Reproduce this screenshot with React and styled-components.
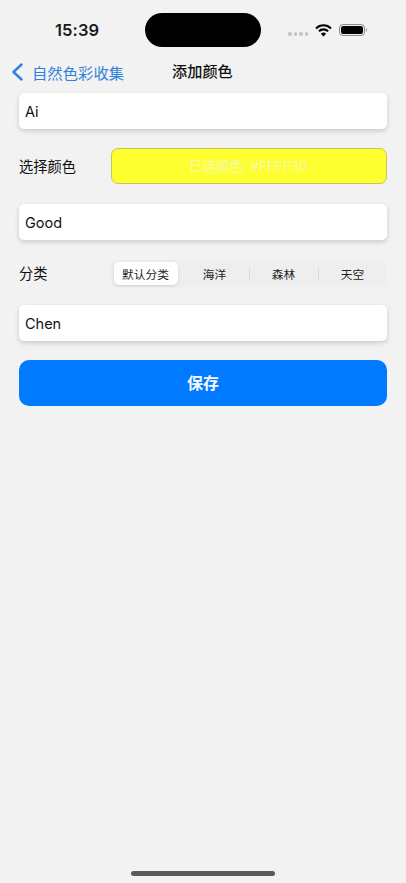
import React from "react";
import styled, { createGlobalStyle } from "styled-components";

const Global = createGlobalStyle`
  html, body { margin: 0; padding: 0; background: #f2f2f2; }
  * { box-sizing: border-box; }
  body { font-family: Inter, "Liberation Sans", "Noto Sans CJK SC", sans-serif; overflow: hidden; }
`;
const CJK = `Inter, "Noto Sans CJK SC", sans-serif`;

const Screen = styled.div`
  width: 406px; height: 883px; background: #f2f2f2; display: flex; flex-direction: column; position: relative; overflow: hidden;
`;
const StatusBar = styled.div`
  height: 56px; padding: 13px 0 0 55px; display: flex; align-items: flex-start;
`;
const Time = styled.div`
  width: 90px; margin-top: 5px; font-size: 16.5px; line-height: 24px; font-weight: 600; color: #1b1b1b; letter-spacing: 0.1px;
`;
const Island = styled.div`
  width: 116px; height: 34px; border-radius: 17px; background: #000;
`;
const StatusIcons = styled.div`
  margin-left: 27px; height: 34px; display: flex; align-items: center;
`;
const Dots = styled.div`
  display: flex; gap: 2px; margin-right: 7px; margin-top: 8px;
`;
const Dot = styled.span`
  width: 3.5px; height: 3.5px; border-radius: 50%; background: #c4c4c4;
`;
const Nav = styled.div`
  height: 32px; margin-bottom: 5px; position: relative; display: flex; align-items: center; padding-left: 11px; font-family: ${CJK};
`;
const Back = styled.div`
  display: flex; align-items: center; gap: 8px; color: #2f80dc; font-size: 15.3px; letter-spacing: 0.05px;
`;
const Title = styled.div`
  position: absolute; left: 172px; top: 0; line-height: 32px; font-size: 15.2px; font-weight: 500; color: #111;
`;
const Form = styled.div`
  padding: 0 19px; display: flex; flex-direction: column;
`;
const Field = styled.div`
  height: 36px; margin-bottom: ${p => p.$mb}px; background: #fff; border-radius: 5px; padding-left: 6px; display: flex; align-items: center;
  font-size: 14.5px; color: #111; box-shadow: 0 2px 5px rgba(0,0,0,.17);
`;
const Row = styled.div`
  display: flex; align-items: center; margin-bottom: ${p => p.$mb}px;
`;
const Label = styled.div`
  width: 92px; padding-bottom: ${p => p.$lift}px; font-family: ${CJK}; font-size: 14.25px; color: #111; flex: none;
`;
const Swatch = styled.div`
  flex: 1; height: 36px; background: #feff30; border: 1px solid #c9c45e; border-radius: 7px; color: #f8f8b4; font-family: ${CJK};
  font-size: 13.4px; display: flex; align-items: center; justify-content: center; padding: 0 1px 2px 0;
`;
const Segments = styled.div`
  flex: 1; height: 27px; background: #eeeeee; border-radius: 6px; padding: 2px 0; display: grid; grid-template-columns: repeat(4, 1fr);
`;
const Segment = styled.div`
  display: flex; align-items: center; justify-content: center; font-family: ${CJK}; font-size: 11.7px; color: #222;
  padding-bottom: 1px; position: relative; border-radius: 5px;
  margin: ${p => (p.$active ? "0 2.5px" : "0")};
  background: ${p => (p.$active ? "#fff" : "transparent")};
  box-shadow: ${p => (p.$active ? "0 1px 3px rgba(0,0,0,.14)" : "none")};
  ${p => p.$divider && `&::before { content: ""; position: absolute; left: 0; top: 5px; bottom: 5px; width: 1px; background: #dcdcdc; }`}
`;
const SaveButton = styled.div`
  height: 46px; border-radius: 10px; background: #007aff; color: #f4f9ff; font-family: ${CJK}; font-size: 16px; font-weight: 600;
  display: flex; align-items: center; justify-content: center; padding-bottom: 2px;
`;
const HomeIndicator = styled.div`
  position: absolute; left: 131px; top: 871px; width: 144px; height: 4.5px; border-radius: 3px; background: #5a5a5a;
`;

const Wifi = () => (
  <svg width="17" height="13" viewBox="0 0 17 13">
    <path d="M1 4.4 A10.6 10.6 0 0 1 16 4.4" fill="none" stroke="#000" strokeWidth="2.1" />
    <path d="M3.9 7.3 A6.5 6.5 0 0 1 13.1 7.3" fill="none" stroke="#000" strokeWidth="2.1" />
    <path d="M8.5 12.6 L5.9 9.7 A3.7 3.7 0 0 1 11.1 9.7 Z" fill="#000" />
  </svg>
);
const BatteryIcon = styled.svg`
  margin-left: 7px;
`;
const Battery = () => (
  <BatteryIcon width="29" height="14" viewBox="0 0 29 14">
    <rect x="0.5" y="1.5" width="25" height="11" rx="3.4" fill="none" stroke="#8a8a8a" />
    <rect x="2" y="3" width="22" height="8" rx="2.2" fill="#000" />
    <path d="M27 5.2 A2 2 0 0 1 27 8.8 Z" fill="#9a9a9a" />
  </BatteryIcon>
);
const Chevron = () => (
  <svg width="13" height="18" viewBox="0 0 13 18">
    <path d="M10.5 1.5 L2.5 9 L10.5 16.5" fill="none" stroke="#2f80dc" strokeWidth="2.4" strokeLinecap="round" strokeLinejoin="round" />
  </svg>
);

export default function App() {
  return (
    <Screen>
      <Global />
      <StatusBar>
        <Time>15:39</Time>
        <Island />
        <StatusIcons>
          <Dots><Dot /><Dot /><Dot /><Dot /></Dots>
          <Wifi />
          <Battery />
        </StatusIcons>
      </StatusBar>
      <Nav>
        <Back><Chevron />自然色彩收集</Back>
        <Title>添加颜色</Title>
      </Nav>
      <Form>
        <Field $mb={19}>Ai</Field>
        <Row $mb={20}>
          <Label $lift={2}>选择颜色</Label>
          <Swatch>已选颜色: #FEFF30</Swatch>
        </Row>
        <Field $mb={20}>Good</Field>
        <Row $mb={18}>
          <Label $lift={3}>分类</Label>
          <Segments>
            <Segment $active>默认分类</Segment>
            <Segment>海洋</Segment>
            <Segment $divider>森林</Segment>
            <Segment $divider>天空</Segment>
          </Segments>
        </Row>
        <Field $mb={19}>Chen</Field>
        <SaveButton>保存</SaveButton>
      </Form>
      <HomeIndicator />
    </Screen>
  );
}
